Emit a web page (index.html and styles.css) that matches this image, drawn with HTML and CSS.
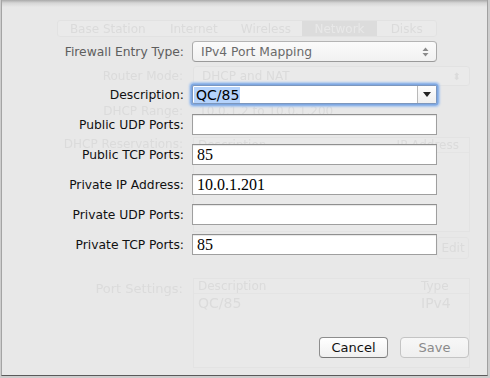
FILE: index.html
```html
<!DOCTYPE html>
<html>
<head>
<meta charset="utf-8">
<link rel="stylesheet" href="styles.css">
</head>
<body>
<div class="window">
  <div class="stage">
    <div class="ghost" aria-hidden="true">
      <div class="g-tabs">
        <span class="g-tab w1">Base Station</span>
        <span class="g-tab w2">Internet</span>
        <span class="g-tab w3">Wireless</span>
        <span class="g-tab w4 sel">Network</span>
        <span class="g-tab w5">Disks</span>
      </div>
      <div class="g-row g-router">
        <span class="g-label">Router Mode:</span>
        <span class="g-popup">DHCP and NAT<span class="g-arrows">⬍</span></span>
      </div>
      <div class="g-row g-range">
        <span class="g-label">DHCP Range:</span>
        <span class="g-text">10.0.1.2 to 10.0.1.200</span>
      </div>
      <div class="g-row g-res">
        <span class="g-label">DHCP Reservations:</span>
        <div class="g-table tall">
          <div class="g-head"><span>Description</span><span>IP Address</span></div>
        </div>
      </div>
      <div class="g-edit-row"><span class="g-button">Edit</span></div>
      <div class="g-row g-ports">
        <span class="g-label">Port Settings:</span>
        <div class="g-table">
          <div class="g-head"><span>Description</span><span class="g-type">Type</span></div>
          <div class="g-line"><span>QC/85</span><span class="g-type">IPv4</span></div>
        </div>
      </div>
    </div>

    <form class="sheet">
      <div class="row row-type">
        <label class="label dim">Firewall Entry Type:</label>
        <div class="popup">
          <span>IPv4 Port Mapping</span>
          <svg class="updown" width="7" height="10" viewBox="0 0 7 10"><path d="M3.5 0.5 L6.5 4 H0.5 Z M3.5 9.5 L6.5 6 H0.5 Z" fill="#8a8a8a"/></svg>
        </div>
      </div>
      <div class="row row-desc">
        <label class="label">Description:</label>
        <div class="combo">
          <span class="combo-text"><span class="selection">QC/85</span></span>
          <span class="combo-btn"><svg width="8" height="5" viewBox="0 0 8 5"><path d="M0 0 H8 L4 5 Z" fill="#222"/></svg></span>
        </div>
      </div>
      <div class="row row-field first">
        <label class="label">Public UDP Ports:</label>
        <div class="field"></div>
      </div>
      <div class="row row-field">
        <label class="label">Public TCP Ports:</label>
        <div class="field">85</div>
      </div>
      <div class="row row-field">
        <label class="label">Private IP Address:</label>
        <div class="field">10.0.1.201</div>
      </div>
      <div class="row row-field">
        <label class="label">Private UDP Ports:</label>
        <div class="field"></div>
      </div>
      <div class="row row-field">
        <label class="label">Private TCP Ports:</label>
        <div class="field">85</div>
      </div>
      <div class="buttons">
        <span class="btn">Cancel</span>
        <span class="btn disabled">Save</span>
      </div>
    </form>
  </div>
</div>
</body>
</html>
```

FILE: styles.css
```css
html, body {
  margin: 0;
  padding: 0;
}
body {
  width: 490px;
  height: 378px;
  overflow: hidden;
  background: #cdcdcd;
  font-family: "DejaVu Sans", sans-serif;
}
.window {
  box-sizing: border-box;
  margin-left: 1px;
  width: 487px;
  height: 376px;
  border-left: 1px solid #a4a4a4;
  border-right: 1px solid #a0a0a0;
  border-bottom: 1px solid #5a5a5a;
  background: linear-gradient(#a9a9a9, #d6d6d6 3px, #e8e8e8 7px, #e8e8e8);
}
.stage {
  display: grid;
  height: 100%;
}
.ghost, .sheet {
  grid-area: 1 / 1;
}

/* ---------- ghost (background window) ---------- */
.ghost {
  display: flex;
  flex-direction: column;
  color: #dbdbdb;
  font-size: 12px;
  filter: blur(0.6px);
}
.g-tabs {
  display: flex;
  margin: 20px 0 0 55px;
  height: 17px;
  width: 380px;
  border: 1px solid #e2e2e2;
  border-radius: 3px;
  background: #eaeaea;
  box-sizing: border-box;
}
.g-tab {
  display: flex;
  align-items: center;
  justify-content: center;
  line-height: 1;
}
.w1 { width: 100px; }
.w2 { width: 73px; }
.w3 { width: 72px; }
.w4 { width: 76px; }
.w5 { width: 59px; }
.g-tab.sel {
  background: #dcdcdc;
  color: #e8e8e8;
}
.g-row {
  display: grid;
  grid-template-columns: 181px 277px;
  column-gap: 10px;
  align-items: center;
}
.g-label {
  text-align: right;
}
.g-router {
  margin-top: 29px;
  height: 18px;
}
.g-popup {
  display: flex;
  justify-content: space-between;
  align-items: center;
  height: 18px;
  padding: 0 8px;
  border: 1px solid #e2e2e2;
  border-radius: 3px;
  background: #eaeaea;
}
.g-arrows {
  font-size: 10px;
}
.g-range {
  margin-top: 20px;
}
.g-text {
  padding-left: 6px;
}
.g-res {
  margin-top: 19px;
  align-items: start;
}
.g-table {
  display: flex;
  flex-direction: column;
  background: #e9e9e9;
  border: 1px solid #e3e3e3;
  height: 90px;
  box-sizing: border-box;
}
.g-table.tall {
  height: 95px;
}
.g-head, .g-line {
  display: flex;
  justify-content: space-between;
  padding: 0 10px 0 4px;
  height: 14px;
  align-items: center;
  border-bottom: 1px solid #e4e4e4;
}
.g-line {
  font-size: 14px;
  height: 18px;
  border-bottom: 0;
}
.g-type {
  width: 38px;
}
.g-edit-row {
  display: flex;
  justify-content: flex-end;
  margin: 5px 18px 0 0;
}
.g-button {
  width: 30px;
  height: 20px;
  display: flex;
  align-items: center;
  justify-content: center;
  border: 1px solid #e3e3e3;
  border-radius: 3px;
}
.g-ports {
  margin-top: 19px;
  align-items: start;
}
.g-ports .g-label {
  font-size: 13px;
  margin-top: 3px;
}

/* ---------- sheet ---------- */
.sheet {
  position: relative;
  z-index: 1;
  display: flex;
  flex-direction: column;
  margin: 0;
  font-size: 12.3px;
  color: #111;
}
.row {
  display: grid;
  grid-template-columns: 182px 245px;
  column-gap: 8px;
  align-items: center;
}
.label {
  text-align: right;
  white-space: nowrap;
}
.label.dim {
  color: #5e5e5e;
}
.row-type {
  margin-top: 41px;
  height: 21px;
}
.popup {
  box-sizing: border-box;
  height: 21px;
  display: flex;
  align-items: center;
  justify-content: space-between;
  padding: 0 7px 0 8px;
  border: 1px solid #a9a9a9;
  border-top-color: #b4b4b4;
  border-bottom-color: #9a9a9a;
  border-radius: 4px;
  background: linear-gradient(#fbfbfb, #f1f1f1);
  color: #6a6a6a;
}
.updown {
  display: block;
}
.row-desc {
  margin-top: 23px;
  height: 19px;
}
.combo {
  box-sizing: border-box;
  height: 19px;
  display: flex;
  align-items: stretch;
  border: 1px solid #7d97bd;
  border-radius: 2px;
  background: #fff;
  box-shadow: 0 0 0 1.5px #7fa8e2, 0 0 2px 2.5px #a9c6ee;
}
.combo-text {
  flex: 1;
  display: flex;
  align-items: center;
  padding-left: 1px;
  font-size: 14px;
  color: #000;
}
.selection {
  background: #b5d3fc;
  padding: 0 1px 0 2px;
  line-height: 16px;
}
.combo-btn {
  width: 18px;
  display: flex;
  align-items: center;
  justify-content: center;
  border-left: 1px solid #b9b9b9;
  background: linear-gradient(#fdfdfd, #efefef);
}
.row-field {
  margin-top: 9px;
  height: 21px;
}
.row-field.first {
  margin-top: 10px;
}
.field {
  box-sizing: border-box;
  height: 21px;
  border: 1px solid #9f9f9f;
  border-top-color: #8f8f8f;
  background: #fff;
  box-shadow: inset 0 1px 1px #e6e6e6;
  font-family: "Liberation Serif", serif;
  font-size: 16px;
  line-height: 19px;
  padding-left: 4px;
  color: #000;
}
.buttons {
  display: flex;
  justify-content: flex-end;
  gap: 12px;
  margin: 82px 18px 0 0;
}
.btn {
  box-sizing: border-box;
  width: 69px;
  height: 21px;
  display: flex;
  align-items: center;
  justify-content: center;
  border: 1px solid #8d8d8d;
  border-bottom-color: #777;
  border-radius: 4px;
  background: linear-gradient(#ffffff, #f0f0f0);
  color: #111;
  font-size: 13px;
}
.btn.disabled {
  border-color: #c4c4c4;
  background: linear-gradient(#f7f7f7, #efefef);
  color: #8a8a8a;
}
```
